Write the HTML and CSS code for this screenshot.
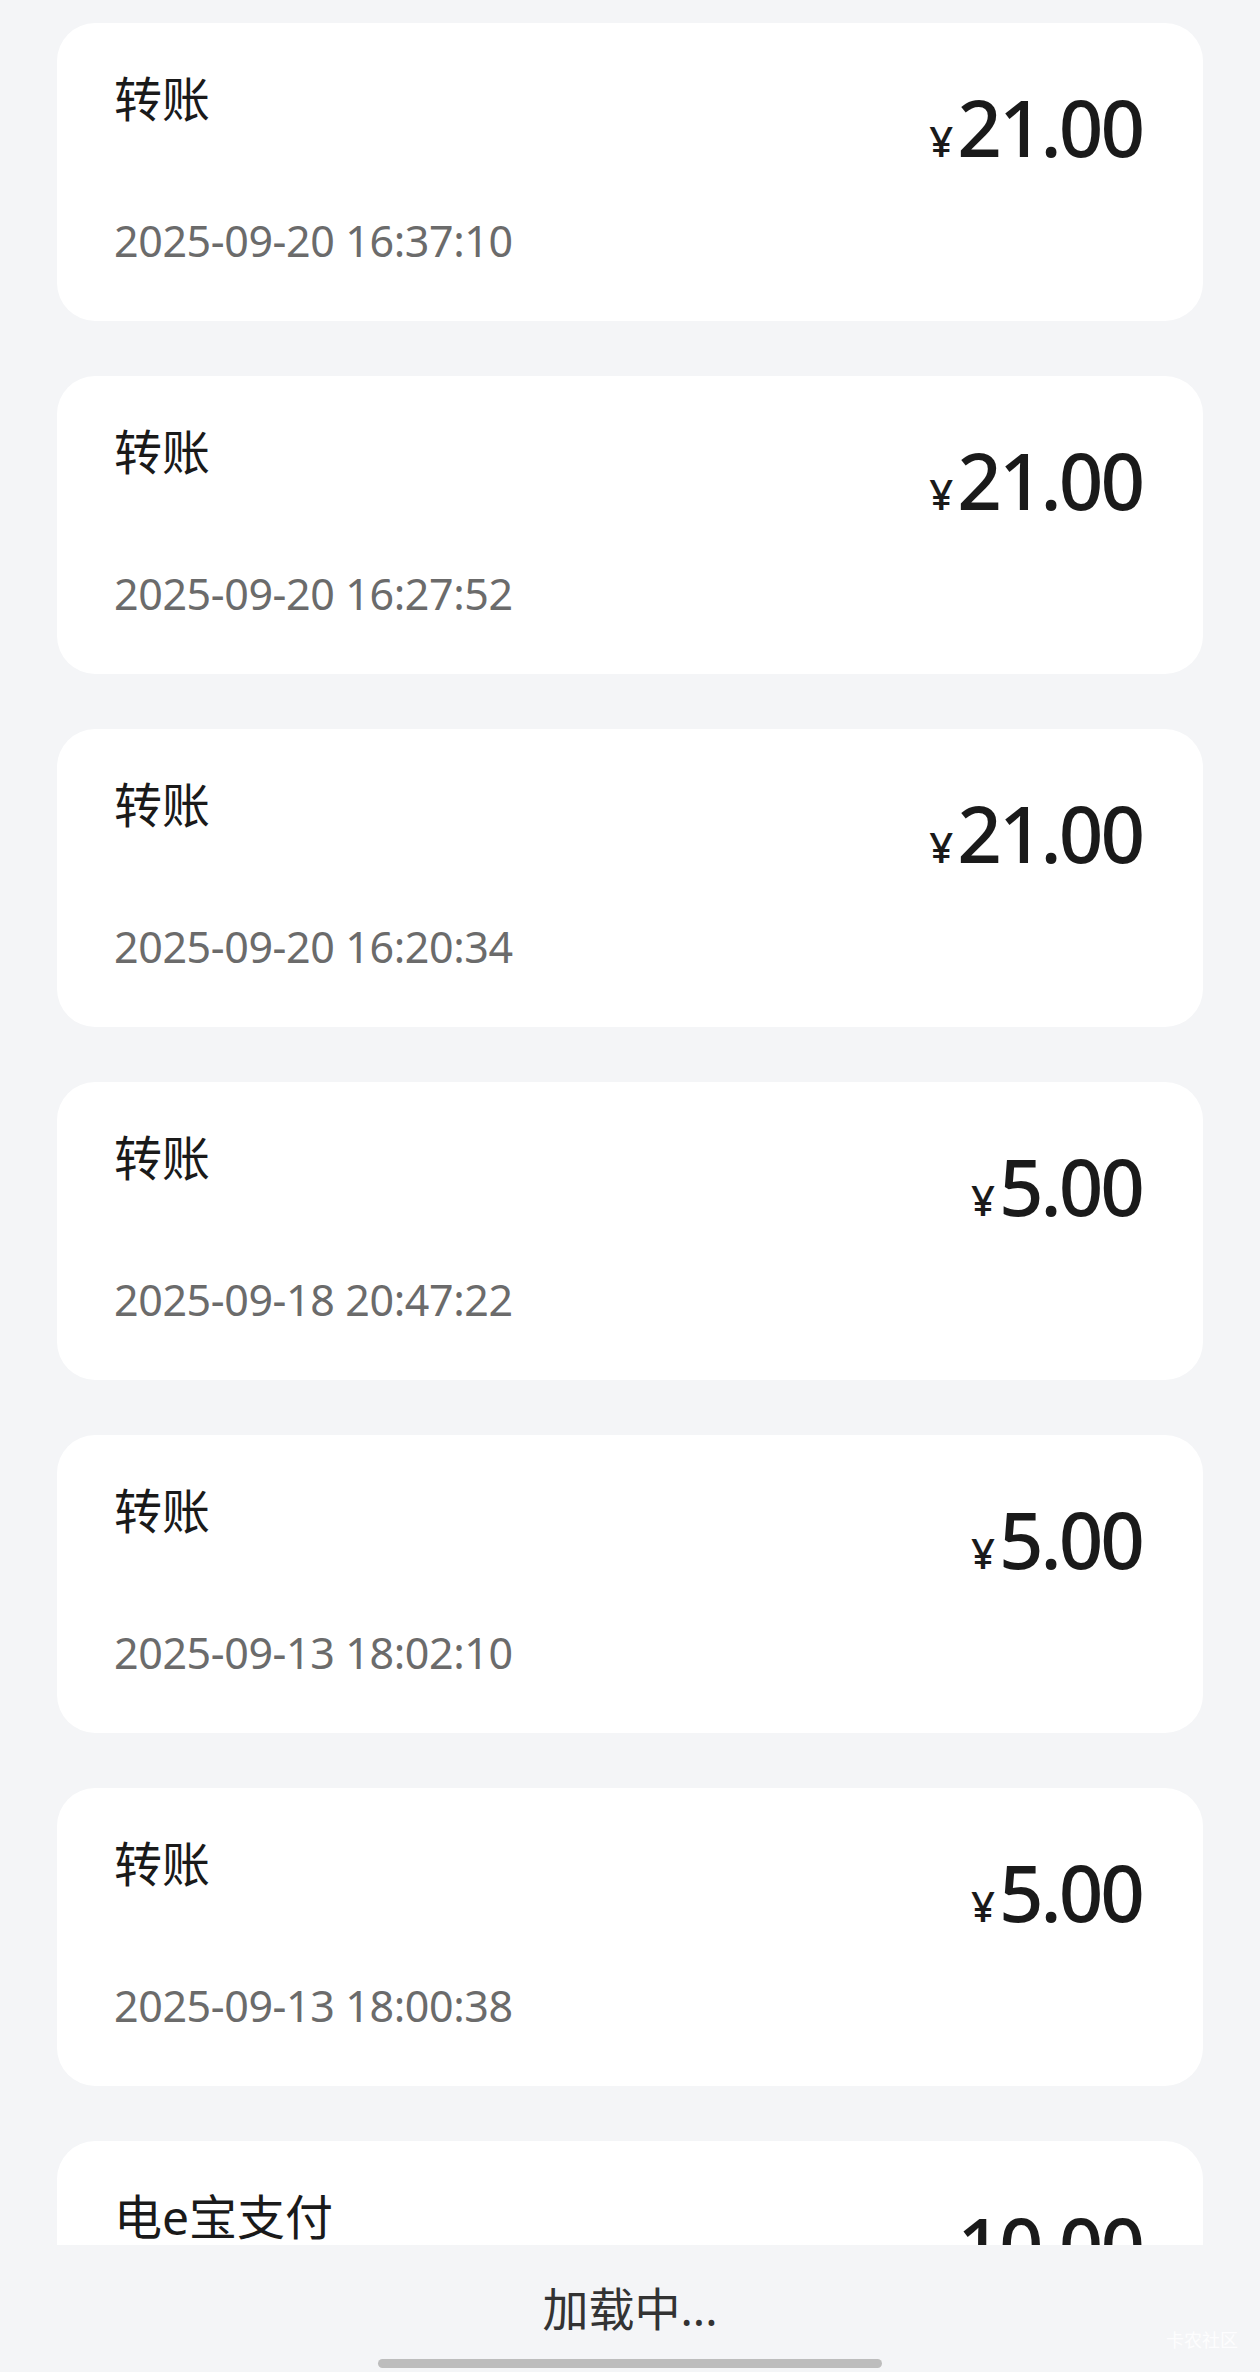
FILE: index.html
```html
<!DOCTYPE html>
<html lang="zh-CN">

<head>
<meta charset="UTF-8" />
<meta name="viewport" content="width=device-width, initial-scale=1.0" />
<title>账单</title>
<link rel="stylesheet" href="styles.css">
</head>

<body>
<div class="list">
<div class="card">
<div class="left">
<div class="title">转账</div>
<div class="time">2025-09-20 16:37:10</div>
</div>
<div class="amount"><span class="yen">¥</span>21.00</div>
</div>
<div class="card">
<div class="left">
<div class="title">转账</div>
<div class="time">2025-09-20 16:27:52</div>
</div>
<div class="amount"><span class="yen">¥</span>21.00</div>
</div>
<div class="card">
<div class="left">
<div class="title">转账</div>
<div class="time">2025-09-20 16:20:34</div>
</div>
<div class="amount"><span class="yen">¥</span>21.00</div>
</div>
<div class="card">
<div class="left">
<div class="title">转账</div>
<div class="time">2025-09-18 20:47:22</div>
</div>
<div class="amount"><span class="yen">¥</span>5.00</div>
</div>
<div class="card">
<div class="left">
<div class="title">转账</div>
<div class="time">2025-09-13 18:02:10</div>
</div>
<div class="amount"><span class="yen">¥</span>5.00</div>
</div>
<div class="card">
<div class="left">
<div class="title">转账</div>
<div class="time">2025-09-13 18:00:38</div>
</div>
<div class="amount"><span class="yen">¥</span>5.00</div>
</div>
<div class="card">
<div class="left">
<div class="title">电e宝支付</div>
</div>
<div class="amount"><span class="yen">¥</span>10.00</div>
</div>
</div>

<div class="footer">
<div class="loading">加载中...</div>
<div class="home-bar"></div>
<div class="mark">卡农社区</div>
</div>
</body>

</html>
```

FILE: styles.css
```css
* {
margin: 0;
padding: 0;
box-sizing: border-box;
}

body {
background: #f4f5f7;
font-family: "Noto Sans", "Noto Sans CJK SC", sans-serif;
height: 2372px;
overflow: hidden;
}

.list {
display: flex;
flex-direction: column;
gap: 55px;
padding: 23px 57px 0 57px;
}

.card {
background: #fff;
border-radius: 38px;
height: 298px;
padding: 44px 61px 0 57px;
display: flex;
justify-content: space-between;
align-items: flex-start;
}

.title {
font-size: 48px;
line-height: 64px;
color: #1a1a1a;
}

.time {
margin-top: 82px;
font-size: 43px;
line-height: 56px;
color: #6b6b6b;
letter-spacing: -0.4px;
}

.amount {
margin-top: 21px;
font-size: 78px;
line-height: 78px;
font-weight: 500;
color: #1a1a1a;
letter-spacing: -3px;
}

.yen {
font-size: 42px;
margin-right: 4px;
letter-spacing: 0;
}

/* bottom bar stays on top of the list */
.footer {
position: fixed;
left: 0;
right: 0;
bottom: 0;
height: 127px;
background: #f4f5f7;
}

.loading {
text-align: center;
font-size: 46px;
line-height: 60px;
padding-top: 33px;
color: #333;
}

.home-bar {
width: 504px;
height: 9px;
margin: 21px auto 0;
border-radius: 5px;
background: #bdbdbd;
}

.mark {
position: absolute;
right: 22px;
bottom: 20px;
font-size: 18px;
color: rgba(255, 255, 255, 0.9);
}
```
